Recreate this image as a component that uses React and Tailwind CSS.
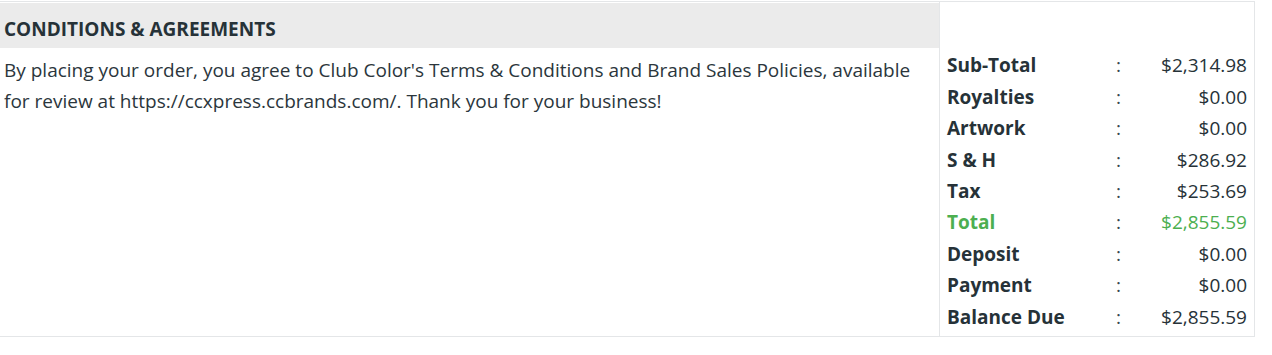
const totals = [
  { label: 'Sub-Total', value: '$2,314.98' },
  { label: 'Royalties', value: '$0.00' },
  { label: 'Artwork', value: '$0.00' },
  { label: 'S & H', value: '$286.92' },
  { label: 'Tax', value: '$253.69' },
  { label: 'Total', value: '$2,855.59', green: true },
  { label: 'Deposit', value: '$0.00' },
  { label: 'Payment', value: '$0.00' },
  { label: 'Balance Due', value: '$2,855.59' },
]

export default function App() {
  return (
    <div className="bg-white pt-px" style={{ fontFamily: '"Open Sans", sans-serif' }}>
      <div className="flex w-[1255px] h-[336px] border-t border-r border-b border-[#e4e6e8] text-[#263238]">
        <div className="w-[939px] pt-px">
          <div className="h-[45px] bg-[#ebebeb] pl-[4px] pt-[15px] text-[19px] font-bold leading-[22px]">
            CONDITIONS &amp; AGREEMENTS
          </div>
          <p className="pl-[4px] pt-[7px] text-[19px] leading-[31px] text-[#2b363c]">
            By placing your order, you agree to Club Color's Terms &amp; Conditions and Brand Sales Policies, available
            for review at https://ccxpress.ccbrands.com/. Thank you for your business!
          </p>
        </div>
        <div className="flex-1 border-l border-[#e4e6e8] pt-[48px] pl-[7px] pr-[7px]">
          {totals.map((row) => (
            <div
              key={row.label}
              className={`flex h-[31.4px] items-center text-[19px] ${row.green ? 'text-[#4caf50]' : ''}`}
            >
              <span className="w-[169px] font-bold">{row.label}</span>
              <span className="w-[10px] text-[#37474f]">:</span>
              <span className="flex-1 text-right">{row.value}</span>
            </div>
          ))}
        </div>
      </div>
    </div>
  )
}
